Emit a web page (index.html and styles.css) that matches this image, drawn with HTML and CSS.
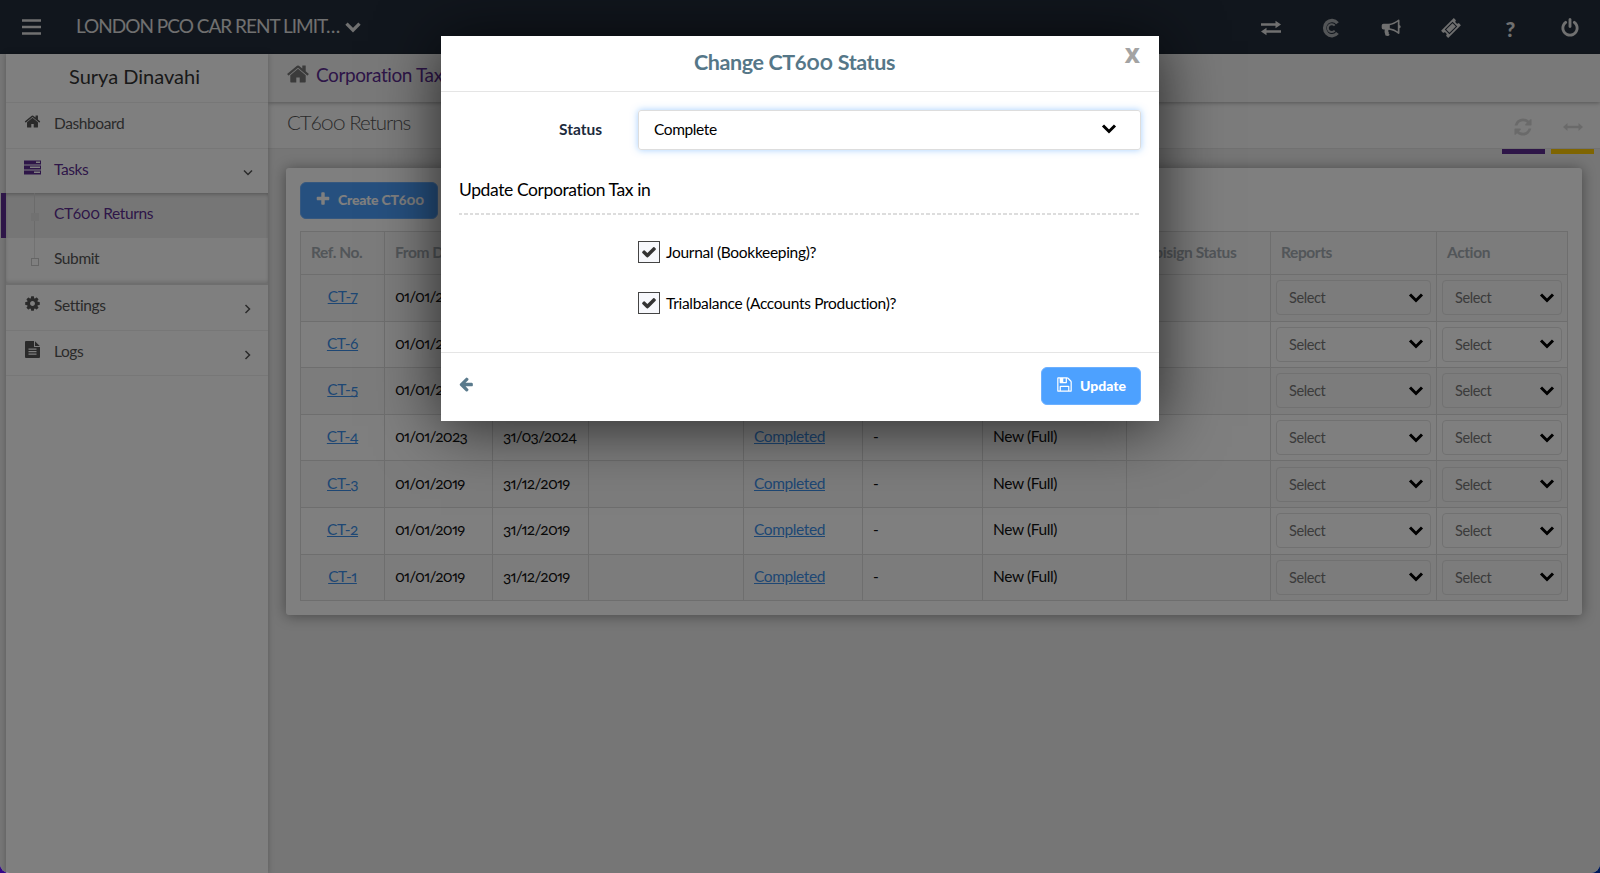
FILE: index.html
```html
<!DOCTYPE html>
<html lang="en">
<head>
  <meta charset="UTF-8">
  <meta name="viewport" content="width=device-width, initial-scale=1.0">
  <title>CT600 Returns</title>
  <link rel="stylesheet" href="styles.css">
</head>
<body>
  <svg class="sprite">
    <symbol id="chevron" viewBox="0 0 16 12"><path d="M2 2.5l6 6 6-6" fill="none" stroke="currentColor" stroke-width="3"/></symbol>
    <symbol id="angle" viewBox="0 0 10 10"><path d="M1 2.5l4 4 4-4" fill="none" stroke="currentColor" stroke-width="1.5"/></symbol>
    <symbol id="check" viewBox="0 0 1792 1792"><path fill="currentColor" d="M1671 566q0 40-28 68l-724 724-136 136q-28 28-68 28t-68-28l-136-136-362-362q-28-28-28-68t28-68l136-136q28-28 68-28t68 28l294 295 656-657q28-28 68-28t68 28l136 136q28 28 28 68z"/></symbol>
    <symbol id="home" viewBox="0 0 1792 1792"><path fill="currentColor" d="M1472 992v480q0 26-19 45t-45 19h-384v-384h-256v384h-384q-26 0-45-19t-19-45v-480q0-1 .5-3t.5-3l575-474 575 474q1 2 1 6zm223-69l-62 74q-8 9-21 11h-3q-13 0-21-7l-692-577-692 577q-12 8-24 7-13-2-21-11l-62-74q-8-10-7-23.5t11-21.5l719-599q32-26 76-26t76 26l244 204v-195q0-14 9-23t23-9h192q14 0 23 9t9 23v408l219 182q10 8 11 21.5t-7 23.5z"/></symbol>
  </svg>

  <div class="app">
    <header class="topbar">
      <svg class="menu-icon" viewBox="0 0 19 16"><path d="M0 1.5h19M0 8h19M0 14.5h19" stroke="currentColor" stroke-width="2.6"/></svg>
      <div class="company">LONDON PCO CAR RENT LIMIT…</div>
      <svg class="company-arrow"><use href="#chevron"/></svg>
      <nav class="top-icons">
        <a><svg width="20" height="16" viewBox="0 0 20 16"><path fill="currentColor" d="M0 3.2h14.5V.8L20 4.5l-5.500 3.700V5.800H0zM20 10.200H5.500V7.800L0 11.500l5.500 3.700v-2.400H20z"/></svg></a>
        <a><svg class="dim" width="18" height="20" viewBox="0 0 18 20" fill="none" stroke="currentColor"><path d="M15.500 5.200A7.300 7.600 0 1 0 15.500 15" stroke-width="3.400"/><path d="M12.700 7.600A3.900 3.900 0 1 0 12.700 12.600" stroke-width="2"/></svg></a>
        <a><svg width="20" height="18" viewBox="0 0 20 18"><path fill="currentColor" fill-rule="evenodd" d="M17.500.5q1 0 1 1v4.600q1.200.5 1.200 1.600t-1.200 1.600v4.700q0 1-1 1-5-4-9.700-4.300-1.500 1 0 2.600-.7 1.200.9 2.500-1.200 2-4.200.8Q3 12.700 3.700 10.600H2.500Q.7 10.600.7 8.800V6.500q0-1.800 1.800-1.800H7.500Q12.500 4.600 17.500.5zm-.7 2.300q-3.700 2.900-8 3.400v3q4.300.5 8 3.400z"/></svg></a>
        <a><svg width="20" height="20" viewBox="0 0 20 20"><g transform="rotate(-45 10 10)"><path fill="currentColor" d="M1 5h18v3a2 2 0 0 0 0 4v3H1v-3a2 2 0 0 0 0-4z"/><path d="M5 7.200h10v5.600H5z" fill="none" stroke="#222c3a" stroke-width="1"/></g></svg></a>
        <a class="help">?</a>
        <a class="power"><svg width="20" height="20" viewBox="0 0 1792 1792"><path fill="currentColor" d="M1664 896q0 156-61 298t-164 245-245 164-298 61-298-61-245-164-164-245-61-298q0-182 80.500-343t226.500-270q43-32 95.500-25t83.500 50q32 42 24.500 94.500t-49.500 84.500q-98 74-151.500 181t-53.500 228q0 104 40.500 198.500t109.500 163.500 163.500 109.500 198.500 40.500 198.500-40.500 163.500-109.500 109.500-163.500 40.500-198.500q0-121-53.500-228t-151.500-181q-42-32-49.500-84.500t24.500-94.500q31-43 84-50t95 25q146 109 226.500 270t80.500 343zm-640-768v640q0 52-38 90t-90 38-90-38-38-90v-640q0-52 38-90t90-38 90 38 38 90z"/></svg></a>
      </nav>
    </header>

    <div class="page">
      <aside class="sidebar">
        <div class="user">Surya Dinavahi</div>
        <a class="item"><svg class="item-icon"><use href="#home"/></svg>Dashboard</a>
        <a class="item open">
          <svg class="item-icon" viewBox="0 0 17 14"><path fill="currentColor" fill-rule="evenodd" d="M0 0h17v4H0zM12 1v1.500h4V1zM0 5h17v4H0zM6 6v1.500h10V6zM0 10h17v4H0zM10 11v1.500h6V11z"/></svg>Tasks
          <svg class="item-arrow"><use href="#angle"/></svg>
        </a>
        <div class="submenu">
          <a class="sub active">CT600 Returns</a>
          <a class="sub">Submit</a>
        </div>
        <a class="item settings">
          <svg class="item-icon" viewBox="0 0 1792 1792"><path fill="currentColor" d="M1152 896q0-106-75-181t-181-75-181 75-75 181 75 181 181 75 181-75 75-181zm512-109v222q0 12-8 23t-20 13l-185 28q-19 54-39 91 35 50 107 138 10 12 10 25t-9 23q-27 37-99 108t-94 71q-12 0-26-9l-138-108q-44 23-91 38-16 136-29 186-7 28-36 28h-222q-14 0-24.500-8.500t-11.500-21.500l-28-184q-49-16-90-37l-141 107q-10 9-25 9-14 0-25-11-126-114-165-168-7-10-7-23 0-12 8-23 15-21 51-66.500t54-70.500q-27-50-41-99l-183-27q-13-2-21-12.500t-8-23.500v-222q0-12 8-23t19-13l186-28q14-46 39-92-40-57-107-138-10-12-10-24 0-10 9-23 26-36 98.500-107.500t94.500-71.500q13 0 26 10l138 107q44-23 91-38 16-136 29-186 7-28 36-28h222q14 0 24.500 8.500t11.500 21.500l28 184q49 16 90 37l142-107q9-9 24-9 13 0 25 10 129 119 165 170 7 8 7 22 0 12-8 23-15 21-51 66.500t-54 70.500q26 50 41 98l183 28q13 2 21 12.500t8 23.500z"/></svg>Settings
          <svg class="item-arrow right"><use href="#angle"/></svg>
        </a>
        <a class="item">
          <svg class="item-icon" viewBox="0 0 15 17"><path fill="currentColor" fill-rule="evenodd" d="M1 0h8v6h6v10q0 1-1 1H1q-1 0-1-1V1q0-1 1-1zM10 .2L14.800 5H10zM3.500 7.500v1.200h8V7.500zM3.500 10v1.200h8V10zM3.500 12.500v1.200h8v-1.200z"/></svg>Logs
          <svg class="item-arrow right"><use href="#angle"/></svg>
        </a>
      </aside>

      <main class="main">
        <div class="breadcrumb"><svg class="crumb-home"><use href="#home"/></svg>Corporation Tax</div>
        <div class="titlebar">
          <h1>CT600 Returns</h1>
          <div class="tools">
            <a class="tool"><svg width="20" height="20" viewBox="0 0 1792 1792"><path fill="currentColor" d="M1639 1056q0 5-1 7-64 268-268 434.500t-478 166.500q-146 0-282.500-55t-243.500-157l-129 129q-19 19-45 19t-45-19-19-45v-448q0-26 19-45t45-19h448q26 0 45 19t19 45-19 45l-137 137q71 66 161 102t187 36q134 0 250-65t186-179q11-17 53-117 8-23 30-23h192q13 0 22.500 9.500t9.500 22.500zm25-800v448q0 26-19 45t-45 19h-448q-26 0-45-19t-19-45 19-45l138-138q-148-137-349-137-134 0-250 65t-186 179q-11 17-53 117-8 23-30 23h-199q-13 0-22.500-9.500t-9.500-22.500v-7q65-268 270-434.500t480-166.500q146 0 284 55.500t245 156.500l130-129q19-19 45-19t45 19 19 45z"/></svg></a>
            <a class="tool yellow"><svg width="20" height="20" viewBox="0 0 20 20"><path fill="currentColor" d="M0 10l4.500-4v2.700h11V6l4.500 4-4.500 4v-2.700h-11V14z"/></svg></a>
          </div>
        </div>

        <section class="card">
          <button class="btn create"><svg width="16" height="16" viewBox="0 0 1792 1792"><path fill="currentColor" d="M1600 736v192q0 40-28 68t-68 28h-416v416q0 40-28 68t-68 28h-192q-40 0-68-28t-28-68v-416h-416q-40 0-68-28t-28-68v-192q0-40 28-68t68-28h416v-416q0-40 28-68t68-28h192q40 0 68 28t28 68v416h416q40 0 68 28t28 68z"/></svg><span>Create CT600</span></button>
          <table class="returns">
            <colgroup><col class="c-ref"><col class="c-from"><col class="c-to"><col class="c-utr"><col class="c-status"><col class="c-sub"><col class="c-type"><col class="c-sign"><col class="c-reports"><col class="c-action"></colgroup>
            <thead>
              <tr><th>Ref. No.</th><th>From Date</th><th></th><th></th><th></th><th></th><th></th><th>Capisign Status</th><th>Reports</th><th>Action</th></tr>
            </thead>
            <tbody>
              <tr><td><a>CT-7</a></td><td class="date">01/01/2023</td><td class="date"></td><td></td><td></td><td></td><td></td><td></td><td><div class="select">Select<svg><use href="#chevron"/></svg></div></td><td><div class="select">Select<svg><use href="#chevron"/></svg></div></td></tr>
              <tr><td><a>CT-6</a></td><td class="date">01/01/2023</td><td class="date"></td><td></td><td></td><td></td><td></td><td></td><td><div class="select">Select<svg><use href="#chevron"/></svg></div></td><td><div class="select">Select<svg><use href="#chevron"/></svg></div></td></tr>
              <tr><td><a>CT-5</a></td><td class="date">01/01/2023</td><td class="date"></td><td></td><td></td><td></td><td></td><td></td><td><div class="select">Select<svg><use href="#chevron"/></svg></div></td><td><div class="select">Select<svg><use href="#chevron"/></svg></div></td></tr>
              <tr><td><a>CT-4</a></td><td class="date">01/01/2023</td><td class="date">31/03/2024</td><td></td><td><a>Completed</a></td><td>-</td><td>New (Full)</td><td></td><td><div class="select">Select<svg><use href="#chevron"/></svg></div></td><td><div class="select">Select<svg><use href="#chevron"/></svg></div></td></tr>
              <tr><td><a>CT-3</a></td><td class="date">01/01/2019</td><td class="date">31/12/2019</td><td></td><td><a>Completed</a></td><td>-</td><td>New (Full)</td><td></td><td><div class="select">Select<svg><use href="#chevron"/></svg></div></td><td><div class="select">Select<svg><use href="#chevron"/></svg></div></td></tr>
              <tr><td><a>CT-2</a></td><td class="date">01/01/2019</td><td class="date">31/12/2019</td><td></td><td><a>Completed</a></td><td>-</td><td>New (Full)</td><td></td><td><div class="select">Select<svg><use href="#chevron"/></svg></div></td><td><div class="select">Select<svg><use href="#chevron"/></svg></div></td></tr>
              <tr><td><a>CT-1</a></td><td class="date">01/01/2019</td><td class="date">31/12/2019</td><td></td><td><a>Completed</a></td><td>-</td><td>New (Full)</td><td></td><td><div class="select">Select<svg><use href="#chevron"/></svg></div></td><td><div class="select">Select<svg><use href="#chevron"/></svg></div></td></tr>
            </tbody>
          </table>
        </section>
      </main>
    </div>

    <div class="backdrop">
      <div class="modal">
        <div class="modal-header">
          <h2>Change CT600 Status</h2>
          <button class="close">X</button>
        </div>
        <div class="modal-body">
          <div class="field">
            <label>Status</label>
            <div class="status-select">Complete<svg><use href="#chevron"/></svg></div>
          </div>
          <h3>Update Corporation Tax in</h3>
          <div class="divider"></div>
          <div class="option"><span class="box"><svg><use href="#check"/></svg></span><span>Journal (Bookkeeping)?</span></div>
          <div class="option"><span class="box"><svg><use href="#check"/></svg></span><span>Trialbalance (Accounts Production)?</span></div>
        </div>
        <div class="modal-footer">
          <svg class="back" viewBox="0 0 1792 1792"><path fill="currentColor" d="M1664 896v128q0 53-32.500 90.500t-84.500 37.500h-704l293 294q38 36 38 90t-38 90l-75 76q-37 37-90 37-52 0-91-37l-651-652q-37-37-37-90 0-52 37-91l651-650q38-38 91-38 52 0 90 38l75 74q38 38 38 91t-38 91l-293 293h704q52 0 84.500 37.500t32.500 90.500z"/></svg>
          <button class="btn update"><svg width="17" height="17" viewBox="0 0 1792 1792"><path fill="currentColor" d="M512 1536h768v-384h-768v384zm896 0h128v-896q0-14-10-38.500t-20-34.500l-281-281q-10-10-34-20t-39-10v416q0 40-28 68t-68 28h-576q-40 0-68-28t-28-68v-416h-128v1280h128v-416q0-40 28-68t68-28h832q40 0 68 28t28 68v416zm-384-928v-320q0-13-9.500-22.500t-22.500-9.500h-192q-13 0-22.500 9.500t-9.500 22.500v320q0 13 9.500 22.500t22.500 9.500h192q13 0 22.500-9.500t9.500-22.500zm640 32v928q0 40-28 68t-68 28h-1344q-40 0-68-28t-28-68v-1344q0-40 28-68t68-28h928q40 0 88 20t76 48l280 280q28 28 48 76t20 88z"/></svg><span>Update</span></button>
        </div>
      </div>
    </div>
  </div>
</body>
</html>
```

FILE: styles.css
```css
* {
  margin: 0;
  padding: 0;
  box-sizing: border-box;
}

body {
  font-family: Lato, "Open Sans", sans-serif;
  font-size: 15.5px;
  font-variant-numeric: oldstyle-nums proportional-nums;
  letter-spacing: -0.4px;
  color: #111;
  background: linear-gradient(to right, #35088a, #001a5c);
  overflow: hidden;
}

.sprite {
  display: none;
}

.app {
  position: relative;
  height: 873px;
  background: #ececec;
  border-radius: 0 0 9px 9px;
  overflow: hidden;
}

/* Top bar */
.topbar {
  display: flex;
  align-items: center;
  height: 54px;
  padding-left: 22px;
  background: #222c3a;
  color: #e0e0e0;
}

.menu-icon {
  width: 19px;
  height: 16px;
  margin-right: 35px;
}

.company {
  width: 264px;
  font-size: 19px;
  letter-spacing: -1px;
  white-space: nowrap;
  padding-bottom: 4px;
}

.company-arrow {
  width: 18px;
  height: 13px;
  margin-left: 4px;
}

.top-icons {
  display: flex;
  margin-left: auto;
}

.top-icons a {
  display: flex;
  align-items: center;
  justify-content: center;
  width: 59.8px;
  height: 54px;
  padding-top: 2px;
}

.top-icons .dim {
  opacity: 0.7;
}

.top-icons .help {
  font-size: 21px;
  font-weight: 900;
}

/* Sidebar */
.page {
  display: flex;
  height: 819px;
  padding-left: 6px;
}

.sidebar {
  flex: none;
  width: 262px;
  background: #fff;
  color: #555;
  box-shadow: 0 0 6px rgba(0, 0, 0, 0.25);
  z-index: 1;
}

.user {
  height: 48px;
  line-height: 44px;
  text-align: center;
  font-size: 20px;
  letter-spacing: 0;
  color: #333;
  padding-right: 5px;
}

.item {
  display: flex;
  align-items: center;
  height: 46px;
  padding: 0 15px 5px 18px;
  border-top: 1px solid #eee;
}

.item:last-child {
  border-bottom: 1px solid #eee;
}

.item-icon {
  width: 17px;
  height: 17px;
  margin: -3px 13px 0 0;
}

.item-arrow {
  width: 10px;
  height: 10px;
  margin: 8px 0 0 auto;
}

.item-arrow.right {
  transform: rotate(-90deg);
}

.item.open {
  height: 45px;
  color: #5c2d91;
}

.open .item-arrow {
  color: #555;
}

.submenu {
  position: relative;
  background: #fcfcfc;
  border-bottom: 2px solid #ddd;
  box-shadow: inset 0 3px 4px -2px rgba(0, 0, 0, 0.3), inset 0 -3px 4px -2px rgba(0, 0, 0, 0.15);
}

/* Line that joins the submenu entries */
.submenu::before {
  content: "";
  position: absolute;
  left: 28px;
  top: 0;
  width: 1px;
  height: 66px;
  background: #e4e4e4;
}

.sub {
  display: block;
  position: relative;
  height: 45px;
  line-height: 40px;
  padding-left: 48px;
}

.sub::before {
  content: "";
  position: absolute;
  left: 25px;
  top: 20px;
  width: 6px;
  height: 6px;
  border: 1px solid #ccc;
  background: #fff;
}

.sub.active {
  margin-left: -5px;
  padding-left: 48px;
  border-left: 5px solid #5c2d91;
  background: rgba(0, 0, 0, 0.06);
  color: #5c2d91;
}

.sub.active::before {
  background: #e2e2e2;
  border-color: #e2e2e2;
}

.item.settings {
  border-top: 0;
  height: 45px;
}

/* Content */
.main {
  flex: 1;
  min-width: 0;
}

.breadcrumb {
  position: relative;
  display: flex;
  align-items: center;
  height: 48px;
  padding: 0 0 8px 18px;
  background: #f3f3f3;
  color: #5c2d91;
  font-size: 19px;
  box-shadow: 0 1px 4px rgba(0, 0, 0, 0.3);
}

.crumb-home {
  width: 24px;
  height: 24px;
  margin-right: 6px;
  color: #777;
}

.titlebar {
  display: flex;
  justify-content: space-between;
  height: 47px;
  padding: 0 6px 0 19px;
  background: #f8f8f8;
  border-bottom: 1px solid #e2e2e2;
}

.titlebar h1 {
  font-size: 20.5px;
  font-weight: 300;
  letter-spacing: -1px;
  line-height: 41px;
  color: #555;
}

.tools {
  display: flex;
  gap: 6px;
}

.tool {
  display: flex;
  align-items: center;
  justify-content: center;
  width: 43px;
  height: 52px;
  border-bottom: 5px solid #5c2d91;
  color: #d5d5d5;
  padding: 3px 2px 0 0;
}

.tool.yellow {
  padding-right: 0;
  border-color: #ffcb05;
}

.card {
  margin: 19px 18px 0;
  height: 447px;
  padding: 14px 15px 0 14px;
  background: #fff;
  border-radius: 3px;
  box-shadow: 0 1px 14px rgba(0, 0, 0, 0.4);
}

.btn {
  display: flex;
  align-items: center;
  height: 37px;
  border: 1px solid #6cb0ff;
  border-radius: 6px;
  background: #4da1ff;
  color: #fff;
  font: 900 14px Lato, sans-serif;
  font-variant-numeric: oldstyle-nums proportional-nums;
}

.btn span {
  padding-bottom: 2px;
}

.create {
  width: 138px;
  padding-left: 14px;
  gap: 7px;
  letter-spacing: -0.2px;
}

.create svg {
  margin-top: -3px;
}

.returns {
  width: 1267px;
  margin-top: 12px;
  table-layout: fixed;
  border-collapse: collapse;
}

.c-ref { width: 84px; }
.c-from { width: 108px; }
.c-to { width: 96px; }
.c-utr { width: 155px; }
.c-status { width: 119px; }
.c-sub { width: 120px; }
.c-type { width: 144px; }
.c-sign { width: 144px; }
.c-reports { width: 166px; }
.c-action { width: 131px; }

.returns th,
.returns td {
  border: 1px solid #ddd;
  padding: 0 10px 3px;
  text-align: left;
  white-space: nowrap;
}

.returns th {
  height: 43px;
  background: #f8f8f8;
  color: #a5acb3;
  font-weight: 700;
}

.returns td {
  height: 46.6px;
}

.returns .date {
  letter-spacing: -0.75px;
}

.returns tbody tr:nth-child(odd) {
  background: #f8f8f8;
}

.returns td:first-child {
  text-align: center;
}

.returns td a {
  color: #3d8fe8;
  text-decoration: underline;
}

.returns td:nth-child(n+9) {
  padding: 0 5px;
}

.select {
  display: flex;
  align-items: center;
  justify-content: space-between;
  height: 35px;
  padding: 0 6px 0 12px;
  border: 1px solid #e2e2e2;
  border-radius: 4px;
  color: #777;
  font-size: 14.5px;
}

.select svg,
.status-select svg {
  width: 16px;
  height: 12px;
  color: #000;
}

/* Modal */
.backdrop {
  position: absolute;
  inset: 0;
  z-index: 10;
  padding-top: 36px;
  background: rgba(0, 0, 0, 0.5);
}

.modal {
  width: 718px;
  height: 385px;
  margin: 0 auto;
  background: #fff;
  box-shadow: 0 5px 60px rgba(0, 0, 0, 0.7);
}

.modal-header {
  position: relative;
  height: 56px;
  border-bottom: 1px solid #e5e5e5;
}

.modal-header h2 {
  padding-right: 11px;
  font-size: 21.5px;
  line-height: 52px;
  text-align: center;
  color: #557788;
}

.close {
  position: absolute;
  top: 5px;
  right: 19px;
  border: 0;
  background: none;
  color: #a3a3a3;
  font: 800 21px "Open Sans", sans-serif;
}

.modal-body {
  height: 260px;
  padding: 18px 18px 0;
  color: #000;
}

.field {
  display: flex;
  align-items: center;
}

.field label {
  width: 143px;
  margin-right: 36px;
  padding-bottom: 3px;
  text-align: right;
  font-weight: 700;
  letter-spacing: 0;
  color: #1c2b3c;
}

.status-select {
  display: flex;
  align-items: center;
  justify-content: space-between;
  flex: 1;
  height: 40px;
  padding: 0 23px 2px 15px;
  border: 1px solid #ddd;
  border-radius: 3px;
  box-shadow: 0 0 7px rgba(77, 161, 255, 0.5);
}

.modal-body h3 {
  margin-top: 25px;
  height: 38px;
  line-height: 30px;
  font-size: 17.5px;
  font-weight: 400;
}

.divider {
  height: 2px;
  margin-bottom: 26px;
  background: repeating-linear-gradient(to right, #ddd 0 3.5px, transparent 3.5px 5.5px);
}

.option {
  display: flex;
  align-items: center;
  gap: 6px;
  height: 22px;
  margin: 0 0 29px 179px;
  letter-spacing: -0.3px;
}

.box {
  display: flex;
  align-items: center;
  justify-content: center;
  width: 22px;
  height: 22px;
  border: 1px solid #444;
  background: #f7f8fc;
}

.box svg {
  width: 16px;
  height: 16px;
  color: #333;
}

.modal-footer {
  display: flex;
  align-items: flex-start;
  justify-content: space-between;
  height: 69px;
  padding: 14px 18px 0;
  border-top: 1px solid #e5e5e5;
}

.back {
  width: 16px;
  height: 16px;
  margin: 9px 0 0 -1px;
  color: #5a7a8c;
}

.update {
  width: 100px;
  height: 38px;
  padding-left: 14px;
  gap: 7px;
}

.update svg {
  margin-top: -3px;
}
```
